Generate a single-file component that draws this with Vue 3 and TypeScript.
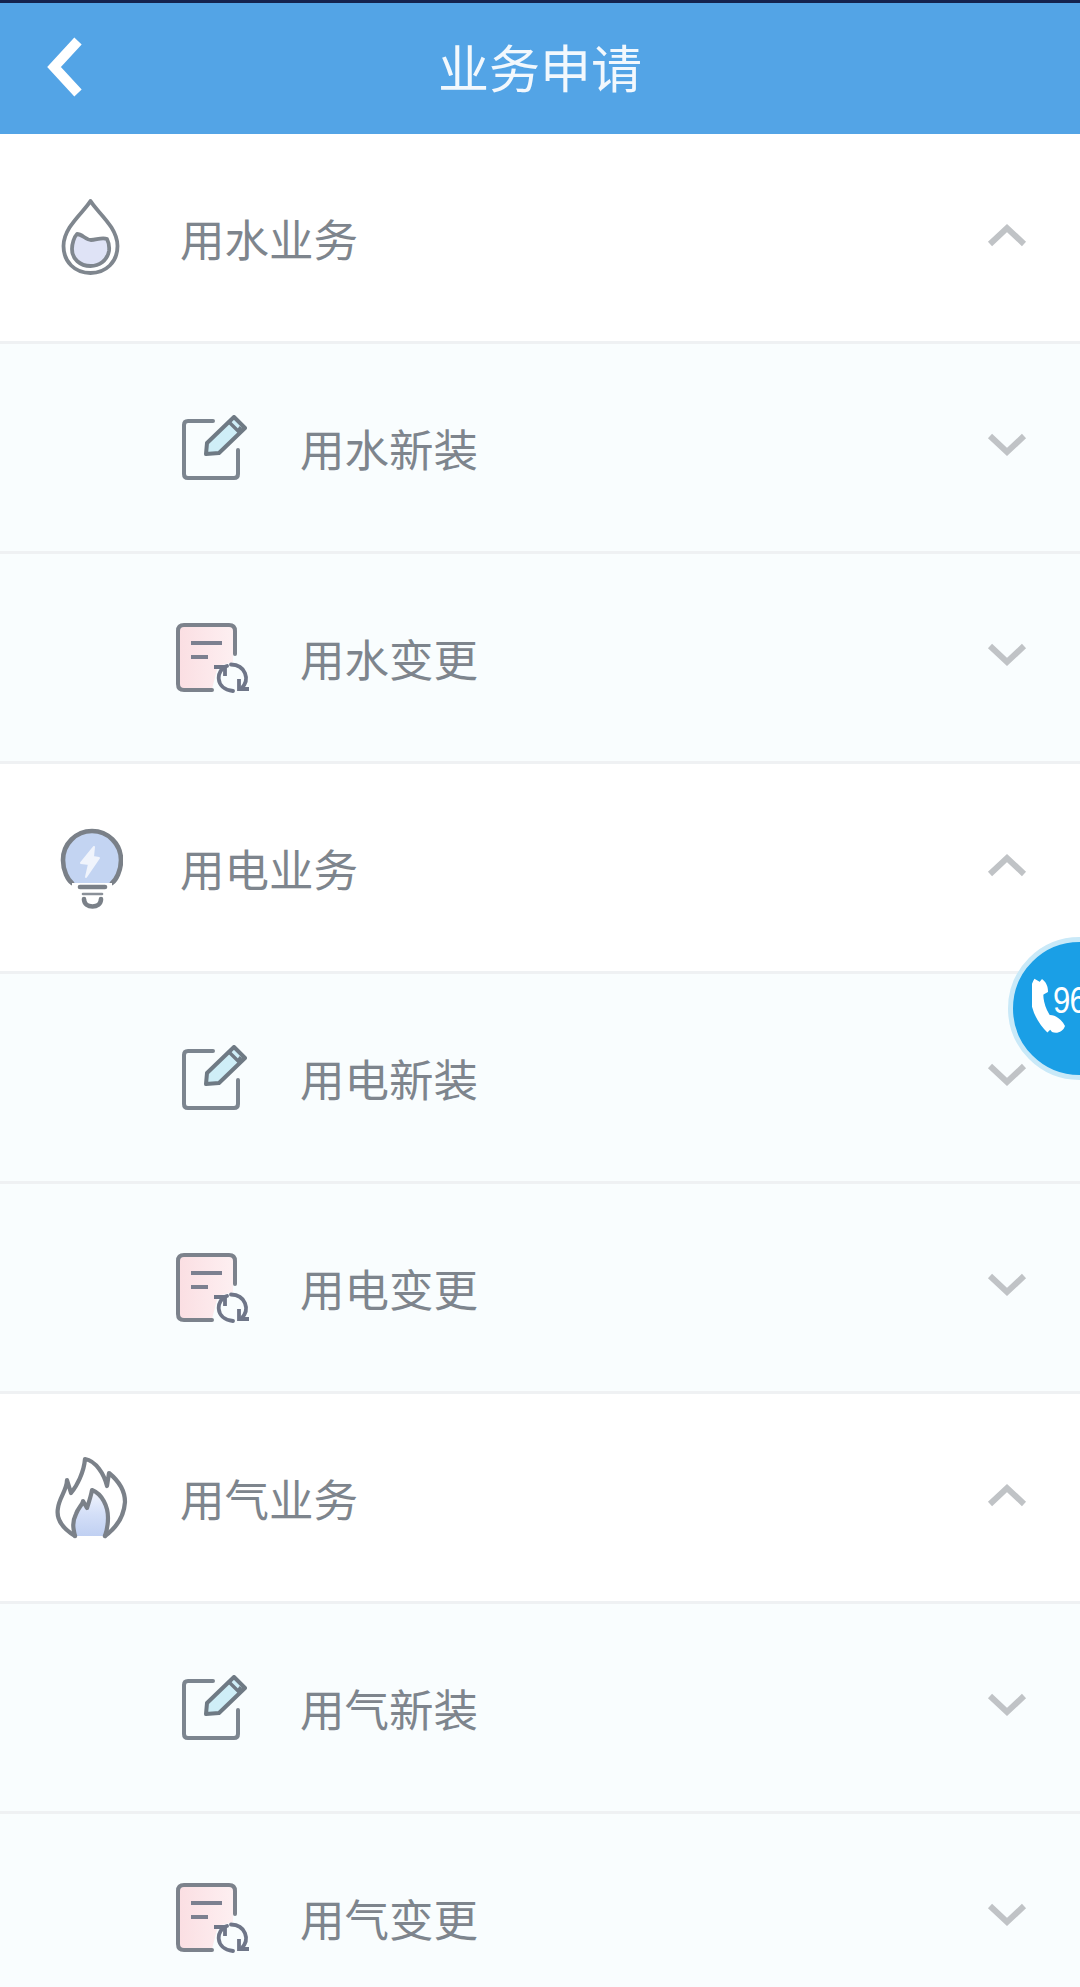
<script setup lang="ts">
interface Group {
  name: string
  icon: 'drop' | 'bulb' | 'flame'
  items: string[]
}

const groups: Group[] = [
  { name: '用水业务', icon: 'drop', items: ['用水新装', '用水变更'] },
  { name: '用电业务', icon: 'bulb', items: ['用电新装', '用电变更'] },
  { name: '用气业务', icon: 'flame', items: ['用气新装', '用气变更'] },
]
</script>

<template>
  <div class="page">
    <header class="bar">
      <svg class="back" viewBox="0 0 46 70" width="46" height="70">
        <path d="M40 12 L16 38 L40 64" fill="none" stroke="#fff" stroke-width="10" />
      </svg>
      <h1 class="title">业务申请</h1>
    </header>

    <section v-for="group in groups" :key="group.name" class="group">
      <div class="row head">
        <span class="icon-box">
          <svg v-if="group.icon === 'drop'" viewBox="55 198 66 82" width="66" height="82">
            <path d="M88.5 202 C82 213 61.5 228 61.5 247 C61.5 263 73 274 88.5 274 C104 274 115.5 263 115.5 247 C115.5 228 95 213 88.5 202 Z" fill="#fff" stroke="#7f868e" stroke-width="3.8" stroke-linejoin="round" />
            <path d="M75 235 C80 235 84 241 89 241 C94 241 100 238 105 240 C107 244 107.5 248 107 252 C105 262 97 267 88.5 267 C78 267 70 260 70 250 C70 245 72 238 75 235 Z" fill="#dfe3f6" stroke="#7f868e" stroke-width="3.8" stroke-linejoin="round" />
          </svg>
          <svg v-else-if="group.icon === 'bulb'" viewBox="26 26 66 84" width="66" height="84">
            <path d="M41 83 C37 80 32 71 32 60 C32 44 45 31 61 31 C77 31 90 44 90 60 C90 71 85 80 81 83" fill="#c3d4f2" stroke="#7a8088" stroke-width="4.6" stroke-linecap="round" />
            <path d="M41 83 L81 83 L81 90 L41 90 Z" fill="#fff" />
            <path d="M63 47 L50 63 L58 64 L55 77 L68 58 L62 57 Z" fill="#f0f4fc" stroke="#f0f4fc" stroke-width="2" stroke-linejoin="round" />
            <path d="M49 87 L74 87" stroke="#7a8088" stroke-width="4.6" stroke-linecap="round" fill="none" />
            <path d="M52 94 L71 94" stroke="#8a9098" stroke-width="2.6" stroke-linecap="round" fill="none" />
            <path d="M53 99 C53 109 70 109 70 99" stroke="#7a8088" stroke-width="4.6" stroke-linecap="round" fill="none" />
          </svg>
          <svg v-else viewBox="22 26 76 84" width="76" height="84">
            <defs>
              <linearGradient id="flame-fill" x1="0" y1="0" x2="0" y2="1">
                <stop offset="0" stop-color="#f4f7fe" />
                <stop offset="0.5" stop-color="#d5e0f8" />
                <stop offset="1" stop-color="#c0d0f2" />
              </linearGradient>
            </defs>
            <path d="M45 106 C43 98 42 92 46 84 C48 78 53 74 53 71 L57 78 C59 72 61 66 62 60 C72 64 78 76 78 88 C78 94 77 100 74 106 Z" fill="url(#flame-fill)" />
            <path d="M45 106 C32 98 26 88 28 78 C29 68 37 60 37 50 L41 63 C47 56 54 42 55 29 C66 31 74 44 77 56 L79 43 C90 52 95 62 95 72 C94 86 86 98 75 106" fill="none" stroke="#7b8189" stroke-width="4.2" stroke-linejoin="round" stroke-linecap="round" />
            <path d="M45 106 C43 98 42 92 46 84 C48 78 53 74 53 71 L57 78 C59 72 61 66 62 60 C72 64 78 76 78 88 C78 94 77 100 75 106" fill="none" stroke="#7b8189" stroke-width="4.2" stroke-linejoin="round" stroke-linecap="round" />
          </svg>
        </span>
        <span class="label">{{ group.name }}</span>
        <svg class="chev" viewBox="0 0 40 24" width="40" height="24">
          <path d="M3 21 L20 5 L37 21" fill="none" stroke="#c0c3c6" stroke-width="6" />
        </svg>
      </div>

      <div v-for="(item, i) in group.items" :key="item" class="row sub">
        <span class="icon-box">
          <svg v-if="i === 0" viewBox="30 24 66 66" width="66" height="66">
            <path d="M62 30 L37 30 C34.5 30 33 31.5 33 34 L33 83 C33 85.5 34.5 87 37 87 L83 87 C85.5 87 87 85.5 87 83 L87 59" fill="none" stroke="#7c858f" stroke-width="4" stroke-linecap="round" />
            <path d="M55 63 L56 52 L83 26 L94 37 L68 62 Z" fill="#cfeef7" stroke="#6f7a84" stroke-width="4" stroke-linejoin="round" />
            <path d="M78 31 L87 40 L90 36" stroke="#6f7a84" stroke-width="3.4" fill="none" />
          </svg>
          <svg v-else viewBox="26 231 76 70" width="76" height="70">
            <defs>
              <linearGradient id="doc-fill" x1="0" y1="0" x2="1" y2="0">
                <stop offset="0" stop-color="#fbdfe3" />
                <stop offset="1" stop-color="#fdeff1" />
              </linearGradient>
            </defs>
            <path d="M34 235 L83 235 L83 270 L68 274 L62 297 L34 297 C31 297 30 295 30 292 L30 239 C30 236 31 235 34 235 Z" fill="url(#doc-fill)" />
            <path d="M62 298 L34 298 C30 298 28 296 28 292 L28 239 C28 235 30 233 34 233 L79 233 C83 233 85 235 85 239 L85 262" fill="none" stroke="#7c828c" stroke-width="4" stroke-linecap="round" />
            <path d="M41 251 L72 251 M41 265 L58 265" stroke="#7c8090" stroke-width="4" fill="none" />
            <path d="M77 274 C66 277 64 297 83 299" fill="none" stroke="#6f7688" stroke-width="3.8" stroke-linecap="round" />
            <path d="M64 275 L75 275 L75 284" fill="none" stroke="#6f7688" stroke-width="3.8" />
            <path d="M81 272.5 C95 273 101 287 91 297" fill="none" stroke="#6f7688" stroke-width="3.8" stroke-linecap="round" />
            <path d="M89 287 L89 297 L99 297" fill="none" stroke="#6f7688" stroke-width="3.8" />
          </svg>
        </span>
        <span class="label">{{ item }}</span>
        <svg class="chev" viewBox="0 0 40 24" width="40" height="24">
          <path d="M3 3 L20 19 L37 3" fill="none" stroke="#c0c3c6" stroke-width="6" />
        </svg>
      </div>
    </section>

    <div class="hotline">
      <svg class="phone" viewBox="0 0 34 56" width="34" height="56">
        <path d="M8 4 C2 14 4 34 20 50" fill="none" stroke="#fff" stroke-width="13" />
        <path d="M10 1 C14 4 16 8 16 14 L7 19 L1 12 Z M18 37 C24 37 30 42 33 48 C31 54 25 56 20 54 L12 44 Z" fill="#fff" />
      </svg>
      <span class="num">96</span>
    </div>
  </div>
</template>

<style>
html, body { margin: 0; padding: 0; background: #fff; }
</style>

<style scoped>
.page {
  position: relative;
  width: 1080px;
  height: 1987px;
  overflow: hidden;
  background: #fff;
  font-family: "Noto Sans CJK SC", "Noto Sans", sans-serif;
}
.bar {
  box-sizing: border-box;
  height: 134px;
  border-top: 3px solid #14234e;
  background: #53a4e6;
  display: flex;
  align-items: center;
  justify-content: center;
  position: relative;
}
.back { position: absolute; left: 38px; top: 26px; }
.title {
  margin: 0;
  color: #f2f8fd;
  font-size: 51px;
  font-weight: 400;
  line-height: 1;
  padding-bottom: 4px;
}
.row {
  box-sizing: border-box;
  height: 210px;
  display: flex;
  align-items: center;
  border-bottom: 3px solid #eff1f3;
}
.head { background: #fff; padding-left: 40px; }
.sub { background: #f9fdfe; padding-left: 164px; }
.icon-box {
  width: 100px;
  height: 90px;
  display: flex;
  align-items: center;
  justify-content: center;
  flex: none;
}
.label {
  color: #7e858d;
  font-size: 44.5px;
  line-height: 1;
  padding-top: 1px;
}
.head .label { margin-left: 40px; }
.sub .label { margin-left: 36px; }
.chev { margin-left: auto; margin-right: 53px; margin-bottom: 5px; }
.hotline {
  position: absolute;
  left: 1008px;
  top: 937px;
  box-sizing: border-box;
  width: 143px;
  height: 143px;
  border-radius: 50%;
  background: #1a9fe6;
  border: 5px solid #c9e9f8;
  display: flex;
  align-items: center;
  padding-left: 19px;
}
.phone { flex: none; transform: translateY(-3px); }
.num {
  color: #fff;
  font-family: "Liberation Sans", sans-serif;
  font-size: 37px;
  line-height: 1;
  letter-spacing: -1px;
  margin-left: -13px;
  transform: translateY(-8px) scaleX(0.84);
  transform-origin: left center;
}
</style>
